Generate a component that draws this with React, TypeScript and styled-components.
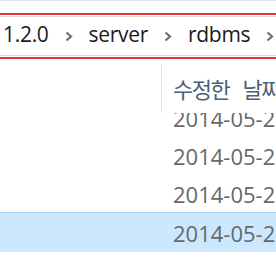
import styled, { createGlobalStyle } from "styled-components"

const GlobalStyle = createGlobalStyle`
  html, body {
    margin: 0;
    padding: 0;
    background: #fff;
    overflow: hidden;
  }
  body {
    font-family: "Open Sans", "Noto Sans CJK KR", sans-serif;
  }
`

const Window = styled.div`
  width: 276px;
  height: 260px;
  overflow: hidden;
  display: flex;
  flex-direction: column;
  border-top: 1px solid #e2e2e2;
`

const AddressHighlight = styled.div`
  margin: 12px -12px 0;
  border: 2px solid #e0353d;
  padding: 1px;
`

const AddressField = styled.div`
  box-sizing: border-box;
  height: 40px;
  border: 1px solid #dadada;
  display: flex;
  align-items: center;
  gap: 16px;
  padding: 0 0 3px 11px;
  white-space: nowrap;
`

const Crumb = styled.span`
  font-size: 21px;
  letter-spacing: -0.3px;
  color: #1b1b1b;
  line-height: 1;
`

const ChevronIcon = () => (
  <svg width="8" height="11" viewBox="0 0 8 11" style={{ marginTop: 3 }}>
    <polyline points="1.5,1.5 6,5.5 1.5,9.5" fill="none" stroke="#707070" strokeWidth="2.2" />
  </svg>
)

const ListHeader = styled.div`
  height: 54px;
  display: grid;
  grid-template-columns: 161px 1px 1fr;
  flex-shrink: 0;
`

const Divider = styled.div`
  align-self: end;
  height: 50px;
  background: #e5e5e5;
`

const HeaderLabel = styled.div`
  padding: 4px 0 0 11px;
  display: flex;
  align-items: center;
  font-size: 22px;
  letter-spacing: -1.5px;
  word-spacing: 9px;
  color: #4c607a;
  white-space: nowrap;
  overflow: hidden;
`

const ScrolledOff = styled.div`
  height: 23px;
  overflow: hidden;
  display: flex;
  flex-direction: column;
  justify-content: flex-end;
  flex-shrink: 0;
`

const Row = styled.div<{ $selected?: boolean }>`
  box-sizing: border-box;
  flex-shrink: 0;
  height: ${p => (p.$selected ? "40px" : "38px")};
  display: flex;
  align-items: center;
  padding-left: 173px;
  background: ${p => (p.$selected ? "#cce8ff" : "transparent")};
  border-top: 1px solid ${p => (p.$selected ? "#a9d6fb" : "transparent")};
  border-bottom: 1px solid ${p => (p.$selected ? "#d6ecfe" : "transparent")};
`

const DateText = styled.span`
  font-size: 22px;
  color: #686868;
  white-space: nowrap;
`

const crumbs = ["1.2.0", "server", "rdbms"]
const dates = ["2014-05-27 오후 3:21", "2014-05-27 오후 3:21", "2014-05-27 오후 3:21"]

export default function App() {
  return (
    <>
      <GlobalStyle />
      <Window>
        <AddressHighlight>
          <AddressField>
            {crumbs.map(c => (
              <>
                <Crumb key={c}>{c}</Crumb>
                <ChevronIcon />
              </>
            ))}
          </AddressField>
        </AddressHighlight>
        <ListHeader>
          <div />
          <Divider />
          <HeaderLabel>수정한 날짜</HeaderLabel>
        </ListHeader>
        <ScrolledOff>
          <Row>
            <DateText>2014-05-27 오후 3:21</DateText>
          </Row>
        </ScrolledOff>
        {dates.map((d, i) => (
          <Row key={i} $selected={i === dates.length - 1}>
            <DateText>{d}</DateText>
          </Row>
        ))}
      </Window>
    </>
  )
}
